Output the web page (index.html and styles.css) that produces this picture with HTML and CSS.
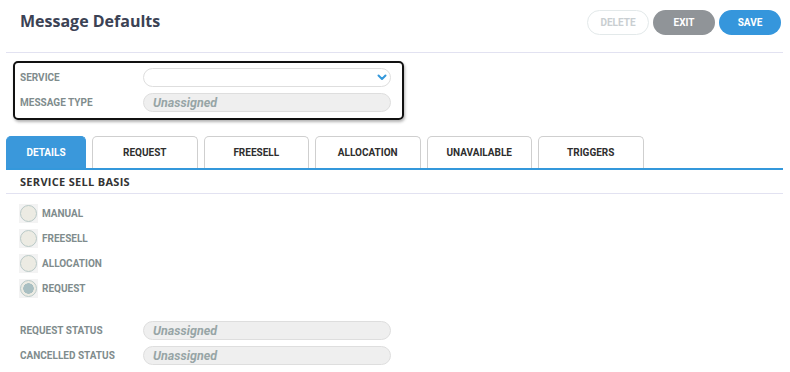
FILE: index.html
```html
<!DOCTYPE html>
<html lang="en">

<head>
  <meta charset="UTF-8">
  <meta name="viewport" content="width=device-width, initial-scale=1.0">
  <title>Message Defaults</title>
  <link rel="stylesheet" href="styles.css">
</head>

<body>
  <div class="page">
    <div class="header">
      <h1 class="title">Message Defaults</h1>
      <div class="actions">
        <button class="btn btn-delete">DELETE</button>
        <button class="btn btn-exit">EXIT</button>
        <button class="btn btn-save">SAVE</button>
      </div>
    </div>

    <div class="focus-box">
      <div class="form-row">
        <span class="label">SERVICE</span>
        <div class="field field-select">
          <svg class="chevron" width="10" height="7" viewBox="0 0 10 7">
            <path d="M1.5 1.5 L5 5 L8.5 1.5" fill="none" stroke="#3498db" stroke-width="2" stroke-linecap="round" stroke-linejoin="round" />
          </svg>
        </div>
      </div>
      <div class="form-row">
        <span class="label">MESSAGE TYPE</span>
        <div class="field field-disabled">Unassigned</div>
      </div>
    </div>

    <div class="tabs">
      <div class="tab active">DETAILS</div>
      <div class="tab">REQUEST</div>
      <div class="tab">FREESELL</div>
      <div class="tab">ALLOCATION</div>
      <div class="tab">UNAVAILABLE</div>
      <div class="tab">TRIGGERS</div>
    </div>

    <div class="section-title">SERVICE SELL BASIS</div>

    <div class="radio-list">
      <label class="radio-row"><span class="radio"></span><span class="label">MANUAL</span></label>
      <label class="radio-row"><span class="radio"></span><span class="label">FREESELL</span></label>
      <label class="radio-row"><span class="radio"></span><span class="label">ALLOCATION</span></label>
      <label class="radio-row"><span class="radio checked"></span><span class="label">REQUEST</span></label>
    </div>

    <div class="status-list">
      <div class="form-row">
        <span class="label">REQUEST STATUS</span>
        <div class="field field-disabled">Unassigned</div>
      </div>
      <div class="form-row">
        <span class="label">CANCELLED STATUS</span>
        <div class="field field-disabled">Unassigned</div>
      </div>
    </div>
  </div>
</body>

</html>
```

FILE: styles.css
```css
body {
  margin: 0;
  padding: 0;
  background-color: #ffffff;
  font-family: "Open Sans", "Noto Sans", sans-serif;
  color: #333333;
}

.page {
  padding: 0 7px 0 6px;
}

.header {
  display: flex;
  justify-content: space-between;
  align-items: flex-start;
  height: 52px;
  padding: 0 2px 0 14px;
  border-bottom: 1px solid #e2e2f1;
}

.title {
  margin: 10px 0 0 0;
  font-size: 16px;
  font-weight: 700;
  color: #3b4254;
}

.actions {
  display: flex;
  gap: 4px;
  margin-top: 10px;
}

.btn {
  width: 62px;
  height: 25px;
  border-radius: 13px;
  border: 1px solid transparent;
  font-family: "Roboto", sans-serif;
  font-size: 10px;
  font-weight: 700;
  color: #ffffff;
  cursor: pointer;
}

.btn-delete {
  background-color: #ffffff;
  border-color: #e3e9ea;
  color: #c9ced1;
}

.btn-exit {
  background-color: #909498;
}

.btn-save {
  background-color: #3596dc;
}

.focus-box {
  width: 391px;
  height: 59px;
  margin: 8px 0 0 7px;
  padding: 5px 0 0 5px;
  box-sizing: border-box;
  border: 2px solid #111111;
  border-radius: 5px;
  box-shadow: 1px 2px 3px rgba(0, 0, 0, 0.3);
  display: flex;
  flex-direction: column;
  gap: 6px;
}

.form-row {
  display: flex;
  align-items: center;
  height: 19px;
}

.label {
  font-family: "Roboto", sans-serif;
  font-size: 10px;
  font-weight: 700;
  color: #7f8c8d;
}

.form-row .label {
  width: 123px;
  flex-shrink: 0;
}

.field {
  width: 248px;
  height: 19px;
  box-sizing: border-box;
  border-radius: 10px;
  border: 1px solid #dedede;
  display: flex;
  align-items: center;
}

.field-select {
  background-color: #ffffff;
  justify-content: flex-end;
  padding-right: 3px;
}

.field-disabled {
  background-color: #efefef;
  padding-left: 9px;
  font-family: "Roboto", sans-serif;
  font-size: 12.5px;
  font-weight: 700;
  font-style: italic;
  color: #97a5a6;
}

.tabs {
  display: flex;
  gap: 6px;
  margin-top: 16px;
  border-bottom: 2px solid #3498db;
}

.tab {
  width: 105.5px;
  height: 32px;
  box-sizing: border-box;
  border: 1px solid #cfcfcf;
  border-bottom: none;
  border-radius: 5px 5px 0 0;
  display: flex;
  align-items: center;
  justify-content: center;
  font-family: "Roboto", sans-serif;
  font-size: 10px;
  font-weight: 700;
  color: #2e2e2e;
}

.tab.active {
  width: 80px;
  background-color: #3a98db;
  border-color: #3a98db;
  color: #ffffff;
}

.section-title {
  height: 24px;
  padding-left: 14px;
  box-sizing: border-box;
  display: flex;
  align-items: center;
  border-bottom: 1px solid #e2e2f1;
  font-family: "Open Sans", sans-serif;
  font-size: 11px;
  font-weight: 700;
  letter-spacing: 0.3px;
  color: #333333;
}

.radio-list {
  display: flex;
  flex-direction: column;
  gap: 6px;
  padding: 10px 0 0 13px;
}

.radio-row {
  display: flex;
  align-items: center;
  gap: 4px;
  height: 19px;
}

.radio {
  width: 19px;
  height: 19px;
  background-color: #f3f3f3;
  display: flex;
  align-items: center;
  justify-content: center;
}

.radio::before {
  content: "";
  width: 15px;
  height: 15px;
  border-radius: 50%;
  border: 1px solid #b9c9c7;
  background-color: #ecebe3;
}

.radio.checked::before {
  background: radial-gradient(circle, #a9bfc2 0, #a9bfc2 5px, #ecebe3 5.5px);
}

.status-list {
  display: flex;
  flex-direction: column;
  gap: 6px;
  padding: 23px 0 0 14px;
}
```
